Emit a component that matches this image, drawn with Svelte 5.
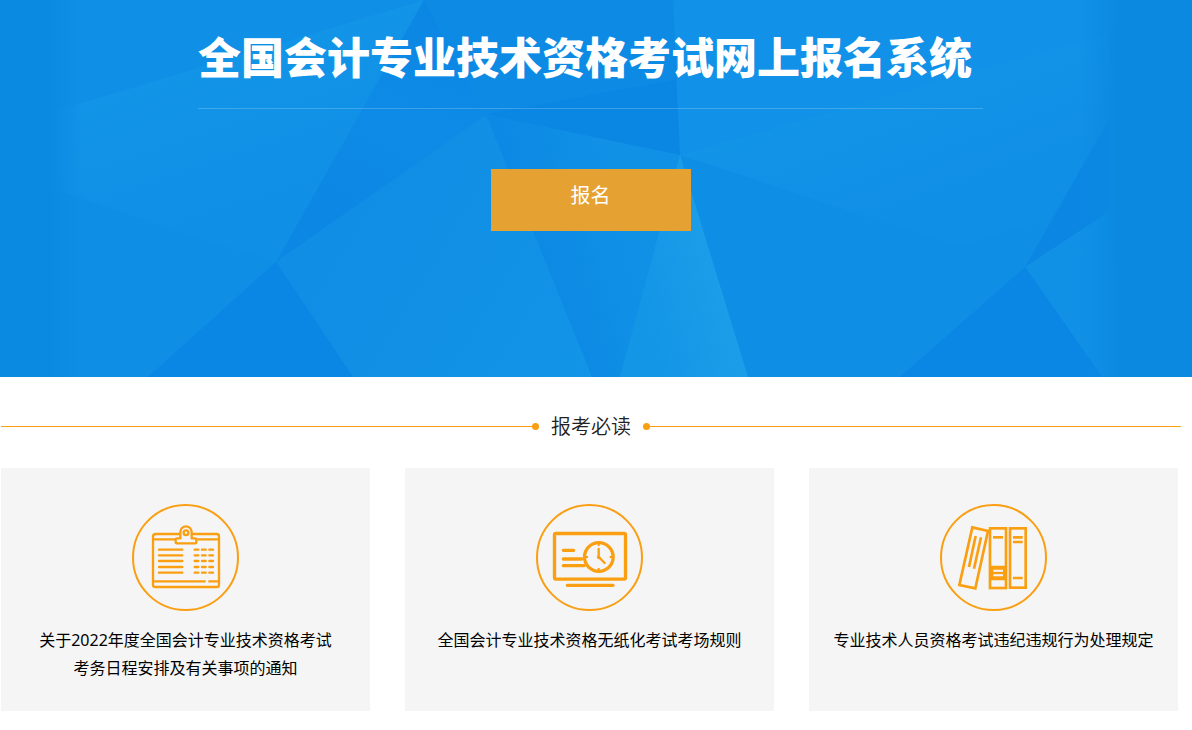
<script>
  const notices = [
    { icon: 'clipboard', lines: ['关于2022年度全国会计专业技术资格考试', '考务日程安排及有关事项的通知'] },
    { icon: 'screen', lines: ['全国会计专业技术资格无纸化考试考场规则'] },
    { icon: 'binders', lines: ['专业技术人员资格考试违纪违规行为处理规定'] }
  ];
  const rows = [155, 172, 189, 207, 224];
</script>

<header class="hero">
  <svg class="facets" viewBox="0 0 1192 377" preserveAspectRatio="none" aria-hidden="true">
    <defs>
      <linearGradient id="leftFade" x1="0" x2="1" y1="0" y2="0">
        <stop offset="0" stop-color="#0b8ae2" />
        <stop offset="0.6" stop-color="#0b8ae2" />
        <stop offset="1" stop-color="#0b8ae2" stop-opacity="0" />
      </linearGradient>
      <linearGradient id="rightFade" x1="0" x2="1" y1="0" y2="0">
        <stop offset="0" stop-color="#0b89e1" stop-opacity="0" />
        <stop offset="0.35" stop-color="#0b89e1" />
        <stop offset="1" stop-color="#0b89e1" />
      </linearGradient>
      <linearGradient id="upperLeft" gradientUnits="userSpaceOnUse" x1="200" y1="60" x2="260" y2="240">
        <stop offset="0" stop-color="#1294e7" />
        <stop offset="1" stop-color="#0f8fe6" />
      </linearGradient>
      <linearGradient id="shade" gradientUnits="userSpaceOnUse" x1="424" y1="0" x2="330" y2="230">
        <stop offset="0" stop-color="#0b87e3" />
        <stop offset="0.5" stop-color="#0e8be6" />
        <stop offset="1" stop-color="#0c87e4" />
      </linearGradient>
      <linearGradient id="centre" gradientUnits="userSpaceOnUse" x1="350" y1="230" x2="590" y2="377">
        <stop offset="0" stop-color="#108ee5" />
        <stop offset="1" stop-color="#1294e7" />
      </linearGradient>
      <linearGradient id="fold" gradientUnits="userSpaceOnUse" x1="530" y1="235" x2="620" y2="210">
        <stop offset="0" stop-color="#0c89e4" />
        <stop offset="1" stop-color="#1091e6" />
      </linearGradient>
      <linearGradient id="beam" gradientUnits="userSpaceOnUse" x1="640" y1="290" x2="715" y2="270">
        <stop offset="0" stop-color="#1496e7" />
        <stop offset="1" stop-color="#1b9de8" />
      </linearGradient>
      <linearGradient id="wing" gradientUnits="userSpaceOnUse" x1="820" y1="100" x2="870" y2="235">
        <stop offset="0" stop-color="#1294e7" />
        <stop offset="1" stop-color="#108fe6" />
      </linearGradient>
    </defs>
    <rect width="1192" height="377" fill="#0f8ee6" />
    <polygon points="50,0 424,0 75,105 50,110" fill="#0f90e6" />
    <polygon points="50,112 75,105 424,0 276,262 190,235 50,188" fill="url(#upperLeft)" />
    <polygon points="424,0 673,0 680,155 486,115 276,262" fill="url(#shade)" />
    <polygon points="424,0 486,115 675,80 673,0" fill="#0d8be4" />
    <polygon points="486,114 675,80 680,155" fill="#0a86e3" />
    <polygon points="486,115 680,155 620,377 592,377" fill="url(#fold)" />
    <polygon points="276,262 486,115 592,377 353,377" fill="url(#centre)" />
    <polygon points="276,262 353,377 148,377" fill="#0a86e5" />
    <polygon points="680,155 748,377 620,377" fill="url(#beam)" />
    <polygon points="673,0 1192,0 1110,32 680,155" fill="#1191e7" />
    <polygon points="680,155 1110,32 1110,120 1050,218 960,247" fill="url(#wing)" />
    <polygon points="1110,118 1025,267 1110,211" fill="#0b87e3" />
    <polygon points="1025,267 1110,211 1130,377 1102,377" fill="#1091e6" />
    <polygon points="1025,267 1102,377 900,377" fill="#0a86e5" />
    <rect width="82" height="377" fill="url(#leftFade)" />
    <rect x="1080" width="112" height="377" fill="url(#rightFade)" />
  </svg>
  <div class="hero-inner">
    <h1>全国会计专业技术资格考试网上报名系统</h1>
    <button type="button">报名</button>
  </div>
</header>

<main>
  <h2><span class="rule start"></span>报考必读<span class="rule end"></span></h2>
  <div class="cards">
    {#each notices as notice}
      <a class="card" href="#{notice.icon}">
        <svg class="icon" viewBox="0 0 321 321" fill="none" stroke="#fa9e12" aria-hidden="true">
          <circle cx="160.5" cy="160.5" r="157.5" stroke-width="6" />
          {#if notice.icon === 'clipboard'}
            <g transform="translate(-21 -18)" stroke-width="7" stroke-linecap="round" stroke-linejoin="round">
              <path d="M163 108H92Q84 108 84 116V260Q84 267 92 267H275Q282 267 282 260V116Q282 108 275 108H204" />
              <path d="M86 124H150M217 124H280" stroke-linecap="butt" />
              <path d="M87 250H242M250 250H280" stroke-linecap="butt" />
              <path d="M166 121V102A17 17 0 0 1 200 102V121H210Q214 121 214 125V132Q214 136 210 136H156Q152 136 152 132V125Q152 121 156 121Z" />
              <circle cx="183" cy="104" r="7" />
              {#each rows as y}
                <path d="M102 {y}H172M209 {y}H220M231 {y}H242M253 {y}H264" />
              {/each}
            </g>
          {:else if notice.icon === 'screen'}
            <g transform="translate(-18 -18)" stroke-width="10" stroke-linecap="round" stroke-linejoin="round">
              <rect x="73.5" y="106.5" width="213" height="137" rx="4" />
              <path d="M112 262H249M100 157H131" />
              <path d="M155 183H100M162 203H100" />
              <circle cx="206.5" cy="177" r="43" />
              <path d="M206 153V177L224 195" stroke-width="7" />
              <path d="M206 137V144M206 210V217M167 177H174M239 177H246" stroke-width="6" stroke-linecap="butt" />
              <circle cx="206" cy="178" r="4" fill="#fa9e12" stroke-width="3" />
            </g>
          {:else}
            <g transform="translate(-18 -18)" stroke-width="8">
              <path d="M115 88L162 99L124 271L76 261Z" />
              <path d="M125 114L105 207M141 118L120 212" />
              <rect x="168" y="91" width="48" height="179" />
              <path d="M177 118H207" />
              <path d="M166 209H218M166 241H218" stroke-width="12" />
              <path d="M173 205V245M212 205V245" stroke-width="10" />
              <path d="M177 225H208" stroke-width="7" />
              <rect x="228" y="91" width="47" height="178" />
              <path d="M237 118H266M237 132H266M237 240H266" />
            </g>
          {/if}
        </svg>
        <span class="label">
          {#each notice.lines as line}<span>{line}</span>{/each}
        </span>
      </a>
    {/each}
  </div>
</main>

<style>
  :global(body) {
    margin: 0;
    background: #fff;
    font-family: 'Noto Sans', 'Noto Sans CJK SC', sans-serif;
  }
  .hero {
    position: relative;
    background: #0b8ae2;
    padding: 0 11px 146px 0;
  }
  .facets {
    position: absolute;
    inset: 0;
    width: 100%;
    height: 100%;
  }
  .hero-inner {
    position: relative;
    display: flex;
    flex-direction: column;
    align-items: center;
    gap: 60px;
  }
  h1 {
    box-sizing: border-box;
    width: 100%;
    max-width: 785px;
    margin: 0;
    padding: 26px 0 18px;
    border-bottom: 1px solid rgba(255, 255, 255, 0.2);
    color: #fff;
    font-size: 43px;
    line-height: 64px;
    font-weight: 900;
  }
  button {
    width: 200px;
    padding: 12px 0 20px;
    border: 0;
    background: #e5a132;
    color: #fff;
    font-family: inherit;
    font-size: 20px;
    line-height: 30px;
    cursor: pointer;
  }
  main {
    padding: 34px 11px 19px 1px;
  }
  h2 {
    display: flex;
    align-items: center;
    gap: 12px;
    margin: 0;
    color: #222;
    font-size: 20px;
    line-height: 31px;
    font-weight: 350;
  }
  .rule {
    flex: 1;
    display: flex;
    align-items: center;
  }
  .rule::before,
  .rule::after {
    content: '';
    background: #fa9e12;
  }
  .start::before,
  .end::after {
    flex: 1;
    height: 1px;
  }
  .start::after,
  .end::before {
    width: 7px;
    height: 7px;
    border-radius: 50%;
  }
  .cards {
    display: grid;
    grid-template-columns: repeat(3, 1fr);
    gap: 35px;
    padding: 26px 3px 0 0;
  }
  .card {
    display: flex;
    flex-direction: column;
    align-items: center;
    gap: 15px;
    padding: 36px 0 29px;
    background: #f5f5f5;
    color: #000;
    text-decoration: none;
  }
  .icon {
    width: 107px;
    height: 107px;
  }
  .label {
    display: flex;
    flex-direction: column;
    text-align: center;
    font-size: 16px;
    line-height: 28px;
  }
</style>
